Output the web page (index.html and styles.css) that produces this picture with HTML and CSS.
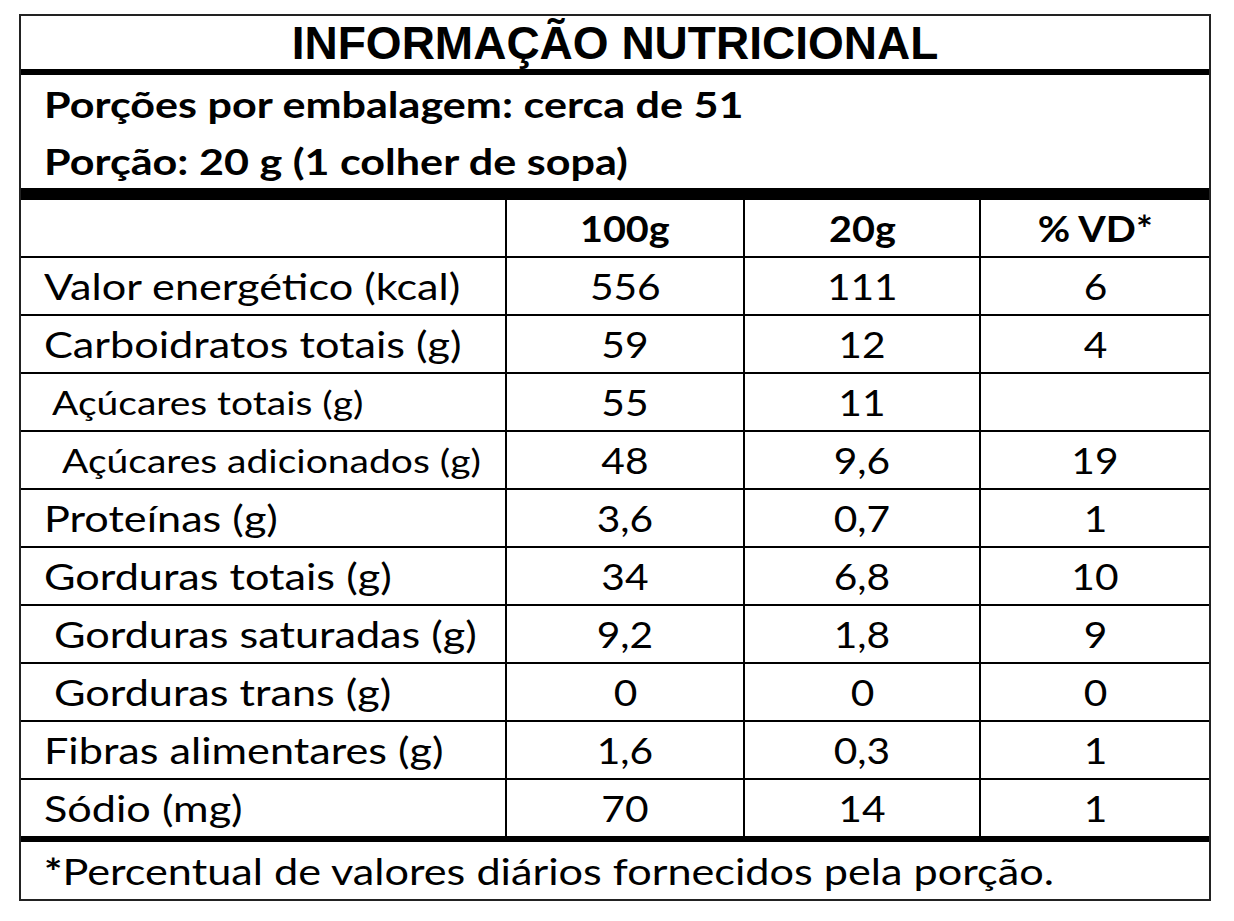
FILE: index.html
```html
<!DOCTYPE html>
<html lang="pt-BR">
<head>
<meta charset="utf-8">
<title>Informação Nutricional</title>
<link rel="stylesheet" href="styles.css">
</head>
<body>
<div class="label">
  <div class="title">INFORMAÇÃO NUTRICIONAL</div>
  <div class="serving">
    <p><span class="t">Porções por embalagem: cerca de 51</span></p>
    <p><span class="t">Porção: 20 g (1 colher de sopa)</span></p>
  </div>
  <div class="grid">
    <div class="cell"></div>
    <div class="cell num head"><span class="t">100g</span></div>
    <div class="cell num head"><span class="t">20g</span></div>
    <div class="cell num head"><span class="t">% VD*</span></div>

    <div class="cell name"><span class="t">Valor energético (kcal)</span></div>
    <div class="cell num"><span class="t">556</span></div>
    <div class="cell num"><span class="t">111</span></div>
    <div class="cell num"><span class="t">6</span></div>

    <div class="cell name"><span class="t">Carboidratos totais (g)</span></div>
    <div class="cell num"><span class="t">59</span></div>
    <div class="cell num"><span class="t">12</span></div>
    <div class="cell num"><span class="t">4</span></div>

    <div class="cell name sub in1"><span class="t">Açúcares totais (g)</span></div>
    <div class="cell num"><span class="t">55</span></div>
    <div class="cell num"><span class="t">11</span></div>
    <div class="cell num"></div>

    <div class="cell name sub in2"><span class="t">Açúcares adicionados (g)</span></div>
    <div class="cell num"><span class="t">48</span></div>
    <div class="cell num"><span class="t">9,6</span></div>
    <div class="cell num"><span class="t">19</span></div>

    <div class="cell name"><span class="t">Proteínas (g)</span></div>
    <div class="cell num"><span class="t">3,6</span></div>
    <div class="cell num"><span class="t">0,7</span></div>
    <div class="cell num"><span class="t">1</span></div>

    <div class="cell name"><span class="t">Gorduras totais (g)</span></div>
    <div class="cell num"><span class="t">34</span></div>
    <div class="cell num"><span class="t">6,8</span></div>
    <div class="cell num"><span class="t">10</span></div>

    <div class="cell name in3"><span class="t">Gorduras saturadas (g)</span></div>
    <div class="cell num"><span class="t">9,2</span></div>
    <div class="cell num"><span class="t">1,8</span></div>
    <div class="cell num"><span class="t">9</span></div>

    <div class="cell name in3"><span class="t">Gorduras trans (g)</span></div>
    <div class="cell num"><span class="t">0</span></div>
    <div class="cell num"><span class="t">0</span></div>
    <div class="cell num"><span class="t">0</span></div>

    <div class="cell name"><span class="t">Fibras alimentares (g)</span></div>
    <div class="cell num"><span class="t">1,6</span></div>
    <div class="cell num"><span class="t">0,3</span></div>
    <div class="cell num"><span class="t">1</span></div>

    <div class="cell name"><span class="t">Sódio (mg)</span></div>
    <div class="cell num"><span class="t">70</span></div>
    <div class="cell num"><span class="t">14</span></div>
    <div class="cell num"><span class="t">1</span></div>
  </div>
  <div class="footer"><span class="t"><b>*</b>Percentual de valores diários fornecidos pela porção.</span></div>
</div>
</body>
</html>
```

FILE: styles.css
```css
html, body {
  margin: 0;
  background: #fff;
}

body {
  padding: 14px 0 0 19px;
  color: #000;
  font-family: Lato, "Open Sans", sans-serif;
}

.label {
  width: 1192px;
  box-sizing: border-box;
  border: 2px solid #222;
}

.t {
  display: inline-block;
  white-space: nowrap;
  transform-origin: left center;
}

.title {
  height: 53px;
  border-bottom: 6px solid #000;
  display: flex;
  align-items: center;
  justify-content: center;
  font-family: "Liberation Sans", Arial, sans-serif;
  font-weight: bold;
  font-size: 46px;
  line-height: 1;
}

.serving {
  height: 113px;
  border-bottom: 12px solid #000;
  padding-left: 23px;
  font-weight: bold;
  font-size: 37px;
}

.serving p {
  margin: 0;
  line-height: 57px;
}

.serving .t {
  transform: scaleX(1.165);
}

.grid {
  display: grid;
  grid-template-columns: 484px 236px 234px 1fr;
  gap: 2px;
  background: #000;
}

.cell {
  background: #fff;
  height: 56px;
  display: flex;
  align-items: center;
  font-size: 36px;
  white-space: nowrap;
}

.num {
  justify-content: center;
}

.num .t {
  transform-origin: center center;
  transform: scaleX(1.13);
}

.head {
  font-weight: bold;
}

.head .t {
  transform: scaleX(1.1);
}

.name {
  padding-left: 23px;
}

.name .t {
  transform: scaleX(1.2);
}

.name.sub {
  font-size: 32.5px;
}

.name.in1 {
  padding-left: 31px;
}

.name.in2 {
  padding-left: 41px;
}

.name.in3 {
  padding-left: 33px;
}

.footer {
  height: 57px;
  border-top: 6px solid #000;
  display: flex;
  align-items: center;
  padding-left: 23px;
  font-size: 36px;
  white-space: nowrap;
}

.footer .t {
  transform: scaleX(1.2);
}

.footer b {
  font-weight: bold;
}
```
